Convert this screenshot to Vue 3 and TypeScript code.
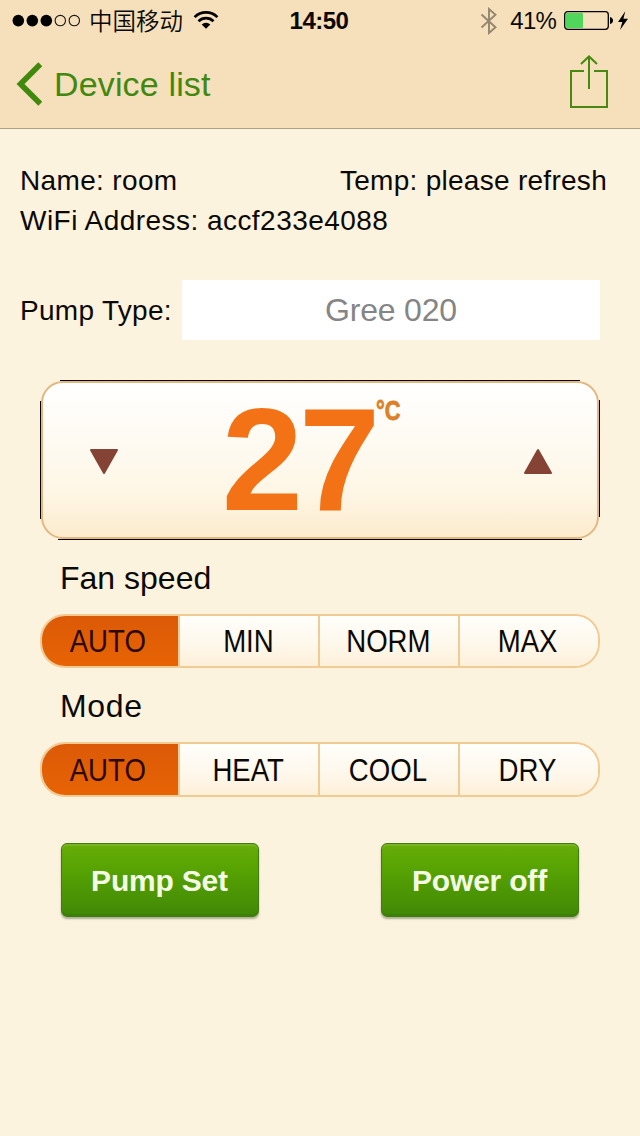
<script setup lang="ts">
import { ref } from 'vue'

interface Segment {
  id: string
  caption: string
  options: string[]
  selected: string
}

const temperature = ref<number>(27)
const segments = ref<Segment[]>([
  { id: 'fan', caption: 'Fan speed', options: ['AUTO', 'MIN', 'NORM', 'MAX'], selected: 'AUTO' },
  { id: 'mode', caption: 'Mode', options: ['AUTO', 'HEAT', 'COOL', 'DRY'], selected: 'AUTO' },
])
const signal: boolean[] = [true, true, true, false, false]
</script>

<template>
  <div class="screen">
    <header class="header">
      <div class="status">
        <div class="status-left">
          <svg class="dots" width="70" height="14" viewBox="0 0 70 14">
            <circle
              v-for="(on, i) in signal"
              :key="i"
              :cx="6.3 + i * 14"
              cy="6.6"
              :r="on ? 5.8 : 5.2"
              :fill="on ? '#000' : 'none'"
              :stroke="on ? 'none' : '#1a1612'"
              stroke-width="1.1"
            />
          </svg>
          <span class="carrier">中国移动</span>
          <svg class="wifi" width="26" height="20" viewBox="0 0 26 20">
            <path d="M1.6 7.1a16.2 16.2 0 0 1 22.8 0" fill="none" stroke="#000" stroke-width="2.7" />
            <path d="M5.5 11.2a10.7 10.7 0 0 1 15 0" fill="none" stroke="#000" stroke-width="2.6" />
            <path d="M13 18.8l-4.3-4.4a6.2 6.2 0 0 1 8.6 0z" fill="#000" />
          </svg>
        </div>
        <span class="clock">14:50</span>
        <div class="status-right">
          <svg class="bluetooth" width="18" height="28" viewBox="0 0 18 28">
            <path d="M1.5 7.5L15.5 20.3 9 26V2l6.5 5.7L1.5 20.5" fill="none" stroke="#94866f" stroke-width="1.9" />
          </svg>
          <span class="percent">41%</span>
          <svg class="battery" width="66" height="22" viewBox="0 0 66 22">
            <rect x=".7" y="1.7" width="43.6" height="17.6" rx="3" fill="none" stroke="#000" stroke-width="1.3" />
            <rect x="2" y="3" width="17" height="15" rx="1" fill="#51d65c" />
            <path d="M46 7q3 1 3 3.5T46 14z" fill="#000" />
            <path d="M61.3 1.2L54 12h4.3l-2.3 8 8-11.2h-4.6z" fill="#000" />
          </svg>
        </div>
      </div>
      <nav class="nav">
        <a class="back">
          <svg width="28" height="44" viewBox="0 0 28 44">
            <path d="M26.3 2.2L6.5 22l19.8 19.8" fill="none" stroke="#40890c" stroke-width="5.6" />
          </svg>
          <span class="back-label">Device list</span>
        </a>
        <svg class="share" width="40" height="54" viewBox="0 0 40 54">
          <path d="M15 15.9H2V52h36V15.9H25" fill="none" stroke="#488912" stroke-width="2" />
          <path d="M20 34V2M12 9L20 1.4l8 7.6" fill="none" stroke="#488912" stroke-width="2" />
        </svg>
      </nav>
    </header>

    <main class="content">
      <section class="info">
        <div class="info-row">
          <span class="name">Name: room</span>
          <span class="temp">Temp: please refresh</span>
        </div>
        <div class="info-row"><span class="address">WiFi Address: accf233e4088</span></div>
      </section>

      <section class="pump">
        <span class="pump-label">Pump Type:</span>
        <div class="pump-field"><span>Gree 020</span></div>
      </section>

      <section class="thermostat">
        <i class="edge top"></i>
        <i class="edge right"></i>
        <i class="edge bottom"></i>
        <i class="edge left"></i>
        <div class="panel">
          <svg class="arrow" width="30" height="28" viewBox="0 0 30 28" @click="temperature--">
            <path d="M2 2h26L15 25z" fill="#854335" stroke="#854335" stroke-width="2" stroke-linejoin="round" />
          </svg>
          <div class="reading">
            <span class="digits">{{ temperature }}</span>
            <span class="unit">°C</span>
          </div>
          <svg class="arrow" width="30" height="28" viewBox="0 0 30 28" @click="temperature++">
            <path d="M2 25h26L15 2z" fill="#854335" stroke="#854335" stroke-width="2" stroke-linejoin="round" />
          </svg>
        </div>
      </section>

      <section v-for="seg in segments" :key="seg.id" class="setting">
        <h2 class="caption" :class="seg.id">{{ seg.caption }}</h2>
        <div class="segments">
          <button
            v-for="option in seg.options"
            :key="option"
            class="segment"
            :class="{ active: option === seg.selected }"
            @click="seg.selected = option"
          >
            <span>{{ option }}</span>
          </button>
        </div>
      </section>

      <section class="actions">
        <button class="action">Pump Set</button>
        <button class="action">Power off</button>
      </section>
    </main>
  </div>
</template>

<style>
body {
  margin: 0;
  background: #fcf3df;
}
</style>

<style scoped>
.screen {
  width: 640px;
  height: 1136px;
  overflow: hidden;
  background: #fcf3df;
  color: #0b0906;
  font-family: 'Liberation Sans', 'Noto Sans CJK SC', sans-serif;
}
.header {
  box-sizing: border-box;
  height: 129px;
  background: #f5e0bb;
  border-bottom: 1px solid #aea386;
}
.status {
  display: grid;
  grid-template-columns: 1fr auto 1fr;
  align-items: center;
  height: 40px;
  padding: 0 10px 0 12px;
}
.status-left,
.status-right {
  display: flex;
  align-items: center;
}
.status-right {
  justify-content: flex-end;
}
.carrier {
  margin-left: 7px;
  font-family: 'Noto Sans CJK SC', sans-serif;
  font-size: 23.5px;
  font-weight: 350;
  line-height: 38px;
  padding-bottom: 2px;
}
.wifi {
  margin: 0 0 2px 10px;
}
.clock {
  margin-right: 4px;
  font-size: 24px;
  font-weight: bold;
  line-height: 42px;
  letter-spacing: -0.5px;
}
.percent {
  margin: 0 8px 0 12px;
  font-size: 24px;
  line-height: 42px;
  letter-spacing: -0.8px;
}
.nav {
  display: flex;
  justify-content: space-between;
  padding: 15px 31px 0 14px;
}
.back {
  display: flex;
  align-items: center;
  height: 58px;
  color: #418811;
}
.back-label {
  margin-left: 12px;
  font-size: 34px;
  line-height: 58px;
  letter-spacing: 0.15px;
}
.info {
  padding: 32px 33px 0 20px;
  font-size: 28px;
  line-height: 40px;
  letter-spacing: 0.35px;
}
.temp {
  letter-spacing: 0.28px;
}
.address {
  letter-spacing: 0.46px;
}
.info-row {
  display: flex;
  justify-content: space-between;
}
.pump {
  display: flex;
  align-items: center;
  height: 60px;
  margin: 39px 40px 0 20px;
  font-size: 28px;
}
.pump-label {
  width: 162px;
  padding-top: 2px;
  letter-spacing: 0.3px;
  white-space: nowrap;
}
.pump-field {
  flex: 1;
  background: #fff;
  color: #858585;
  font-size: 32px;
  line-height: 60px;
  letter-spacing: -0.2px;
  text-align: center;
}
.thermostat {
  position: relative;
  box-sizing: border-box;
  width: 560px;
  height: 160px;
  margin: 40px auto 0;
  padding: 1px;
}
.edge {
  position: absolute;
  background: #080402;
}
.edge.top {
  top: 0;
  left: 20px;
  right: 20px;
  height: 1px;
}
.edge.bottom {
  bottom: 0;
  left: 18px;
  right: 18px;
  height: 1px;
}
.edge.left {
  left: 0;
  top: 21px;
  bottom: 21px;
  width: 1px;
}
.edge.right {
  right: 0;
  top: 20px;
  bottom: 23px;
  width: 1px;
}
.panel {
  display: flex;
  align-items: center;
  justify-content: space-between;
  box-sizing: border-box;
  height: 158px;
  padding: 0 44px 0 46px;
  border: 2px solid #e2b782;
  border-radius: 22px;
  background: linear-gradient(#fff, #fef9ee 50%, #fef7e6 70%, #fdebcd);
}
.arrow {
  margin-top: 3px;
}
.reading {
  display: flex;
  margin-right: 18px;
  color: #f47216;
}
.digits {
  font-size: 146px;
  font-weight: bold;
  line-height: 160px;
  letter-spacing: -4px;
}
.unit {
  width: 26px;
  color: #dc8128;
  font-size: 28px;
  font-weight: bold;
  line-height: 61px;
  transform: scaleX(0.78);
  transform-origin: left;
  -webkit-text-stroke: 0.8px #dc8128;
}
.caption {
  margin: 0;
  padding-left: 60px;
  font-size: 32px;
  font-weight: normal;
  line-height: 76px;
  height: 74px;
}
.caption.mode {
  letter-spacing: 0.7px;
}
.setting {
  height: 128px;
}
.segments {
  display: flex;
  box-sizing: border-box;
  width: 560px;
  height: 54px;
  margin: 0 auto;
  overflow: hidden;
  border: 2px solid #f0cb94;
  border-radius: 25px;
}
.segment {
  flex: 0 0 140px;
  box-sizing: border-box;
  padding: 2px 2px 0 0;
  border: 0;
  border-right: 2px solid #f0cb94;
  background: linear-gradient(#fffefb, #fef8ec 55%, #fdf0d9);
  color: #0b0906;
  font: 31px 'Liberation Sans', sans-serif;
}
.segment:first-child {
  flex-basis: 138px;
  padding-right: 4px;
}
.segment:last-child {
  flex-basis: 138px;
  padding-right: 3px;
  border-right: 0;
}
.segment span {
  display: inline-block;
  transform: scaleX(0.89);
}
.segment.active {
  background: linear-gradient(#dc5a07, #e76304);
  color: #2c0803;
}
.setting + .setting .segments {
  height: 55px;
}
.actions {
  display: flex;
  justify-content: space-between;
  padding: 47px 61px 0;
}
.action {
  box-sizing: border-box;
  width: 198px;
  height: 74px;
  padding: 2px 1px 0 0;
  border: 1px solid #437c13;
  border-radius: 6px;
  background: linear-gradient(#68ac08, #57a303 35%, #418806);
  box-shadow: 0 2px 2px #77806099, inset 0 2px 1px #8abc3d88, inset 0 -2px 1px #36780a88;
  color: #f5fce5;
  font: bold 30px 'Liberation Sans', sans-serif;
  letter-spacing: -0.2px;
}
</style>
